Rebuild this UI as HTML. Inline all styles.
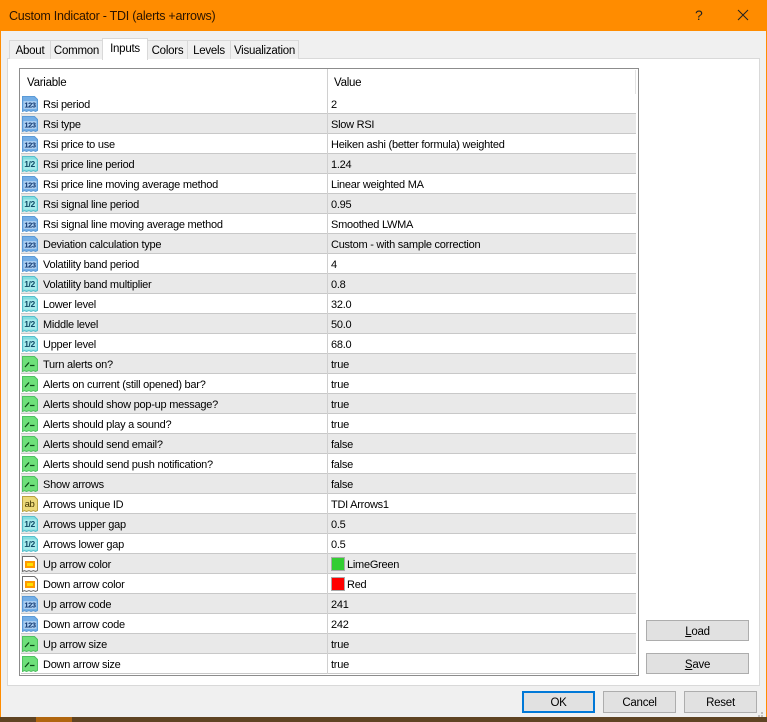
<!DOCTYPE html>
<html><head><meta charset="utf-8"><style>
html,body{margin:0;padding:0;background:#f0f0f0}
body{width:767px;height:722px;position:relative;overflow:hidden;font-family:"Liberation Sans",sans-serif;font-size:11px;letter-spacing:-.25px;color:#000}
div{position:absolute;box-sizing:border-box;white-space:nowrap}
.tab{top:40px;height:19px;background:#f0f0f0;border:1px solid #d9d9d9;border-bottom:none;text-align:center;line-height:20px;font-size:11.500px}
.btn{background:#e1e1e1;border:1px solid #adadad;text-align:center;line-height:22px;height:22px;font-size:11.500px}
.r{left:21px;width:615px;height:20px;border-bottom:1px solid #c8c8c8;background:#fff}
.g{background:#e9e9e9}
.n{left:22px;top:3px;line-height:17px}
.v{left:310px;top:3px;line-height:17px}
.r svg{position:absolute;left:1px;top:2px}
.s{position:absolute;width:14px;height:14px;left:310px;top:3px;border:1px solid #aaa;box-sizing:border-box}
svg text{letter-spacing:-.4px}
</style></head><body>
<svg width="0" height="0" style="position:absolute"><defs>
<symbol id="b" viewBox="0 0 16 16"><path d="M.5.5h12l3 3v11l-2 1-2-1-2.500 1-2-1-2.500 1-2-1-2 1z" fill="#74aee6" stroke="#5a9ad6"/><path d="M1.500 5h13v8h-13z" fill="#a9cdf0"/><text x="8" y="11.300" font-size="7.500" font-weight="bold" text-anchor="middle" fill="#10356e" font-family="Liberation Sans">123</text></symbol>
<symbol id="c" viewBox="0 0 16 16"><path d="M.5.5h12l3 3v11l-2 1-2-1-2.500 1-2-1-2.500 1-2-1-2 1z" fill="#84dde0" stroke="#55bfcc"/><path d="M1.500 3.500h13v10h-13z" fill="#a6ebec"/><text x="7.500" y="11" font-size="8.500" text-anchor="middle" fill="#104a66" font-weight="bold" font-family="Liberation Sans">1/2</text></symbol>
<symbol id="t" viewBox="0 0 16 16"><path d="M.5.5h12l3 3v11l-2 1-2-1-2.500 1-2-1-2.500 1-2-1-2 1z" fill="#6ee07a" stroke="#4ec060"/><path d="M3 11l4-4.500M8 9.500h4.500" stroke="#0c4a18" stroke-width="1.300" fill="none"/></symbol>
<symbol id="a" viewBox="0 0 16 16"><path d="M.5.5h12l3 3v11l-2 1-2-1-2.500 1-2-1-2.500 1-2-1-2 1z" fill="#ecd97a" stroke="#b8a040"/><text x="7.500" y="11" font-size="9.500" text-anchor="middle" fill="#3e3200" font-family="Liberation Sans">ab</text></symbol>
<symbol id="o" viewBox="0 0 16 16"><path d="M.5.5h12l3 3v11l-2 1-2-1-2.500 1-2-1-2.500 1-2-1-2 1z" fill="#fff" stroke="#6e6e6e"/><rect x="3" y="5" width="10" height="7" fill="#ff9a00"/><rect x="5" y="7" width="6" height="3" fill="#ffe000"/></symbol>
</defs></svg>
<div style="left:0;top:0;width:767px;height:31px;background:#ff8c00"></div>
<div style="left:9px;top:7px;font-size:12.500px;line-height:18px;color:#2a1400">Custom Indicator - TDI (alerts +arrows)</div>
<div style="left:695px;top:6px;font-size:14px;line-height:18px;color:#222">?</div>
<svg style="position:absolute;left:737px;top:9px" width="12" height="12"><path d="M1 1l10 10M11 1L1 11" stroke="#222" fill="none"/></svg>
<div style="left:0;top:31px;width:1px;height:686px;background:#ff8c00"></div>
<div style="left:766px;top:31px;width:1px;height:686px;background:#ff8c00"></div>
<div style="left:0;top:717px;width:767px;height:5px;background:#5f4423"></div>
<div style="left:36px;top:717px;width:36px;height:5px;background:#b0660f"></div>

<div style="left:7px;top:58px;width:753px;height:628px;background:#fff;border:1px solid #d9d9d9"></div>
<div class="tab" style="left:9px;width:42px">About</div>
<div class="tab" style="left:50px;width:53px">Common</div>
<div class="tab" style="left:102px;width:46px;top:38px;height:22px;background:#fff;z-index:2;line-height:21px">Inputs</div>
<div class="tab" style="left:147px;width:41px">Colors</div>
<div class="tab" style="left:187px;width:44px">Levels</div>
<div class="tab" style="left:230px;width:69px">Visualization</div>

<div style="left:19px;top:68px;width:620px;height:608px;background:#fff;border:1px solid #8c8c8c"></div>
<div style="left:27px;top:75px;line-height:16px;font-size:11.500px">Variable</div>
<div style="left:334px;top:75px;line-height:16px;font-size:11.500px">Value</div>
<div style="left:635px;top:70px;width:1px;height:24px;background:#e4e4e4"></div>

<div class="r" style="top:94px"><svg width="16" height="16"><use href="#b"/></svg><div class="n">Rsi period</div><div class="v">2</div></div>
<div class="r g" style="top:114px"><svg width="16" height="16"><use href="#b"/></svg><div class="n">Rsi type</div><div class="v">Slow RSI</div></div>
<div class="r" style="top:134px"><svg width="16" height="16"><use href="#b"/></svg><div class="n">Rsi price to use</div><div class="v">Heiken ashi (better formula) weighted</div></div>
<div class="r g" style="top:154px"><svg width="16" height="16"><use href="#c"/></svg><div class="n">Rsi price line period</div><div class="v">1.24</div></div>
<div class="r" style="top:174px"><svg width="16" height="16"><use href="#b"/></svg><div class="n">Rsi price line moving average method</div><div class="v">Linear weighted MA</div></div>
<div class="r g" style="top:194px"><svg width="16" height="16"><use href="#c"/></svg><div class="n">Rsi signal line period</div><div class="v">0.95</div></div>
<div class="r" style="top:214px"><svg width="16" height="16"><use href="#b"/></svg><div class="n">Rsi signal line moving average method</div><div class="v">Smoothed LWMA</div></div>
<div class="r g" style="top:234px"><svg width="16" height="16"><use href="#b"/></svg><div class="n">Deviation calculation type</div><div class="v">Custom - with sample correction</div></div>
<div class="r" style="top:254px"><svg width="16" height="16"><use href="#b"/></svg><div class="n">Volatility band period</div><div class="v">4</div></div>
<div class="r g" style="top:274px"><svg width="16" height="16"><use href="#c"/></svg><div class="n">Volatility band multiplier</div><div class="v">0.8</div></div>
<div class="r" style="top:294px"><svg width="16" height="16"><use href="#c"/></svg><div class="n">Lower level</div><div class="v">32.0</div></div>
<div class="r g" style="top:314px"><svg width="16" height="16"><use href="#c"/></svg><div class="n">Middle level</div><div class="v">50.0</div></div>
<div class="r" style="top:334px"><svg width="16" height="16"><use href="#c"/></svg><div class="n">Upper level</div><div class="v">68.0</div></div>
<div class="r g" style="top:354px"><svg width="16" height="16"><use href="#t"/></svg><div class="n">Turn alerts on?</div><div class="v">true</div></div>
<div class="r" style="top:374px"><svg width="16" height="16"><use href="#t"/></svg><div class="n">Alerts on current (still opened) bar?</div><div class="v">true</div></div>
<div class="r g" style="top:394px"><svg width="16" height="16"><use href="#t"/></svg><div class="n">Alerts should show pop-up message?</div><div class="v">true</div></div>
<div class="r" style="top:414px"><svg width="16" height="16"><use href="#t"/></svg><div class="n">Alerts should play a sound?</div><div class="v">true</div></div>
<div class="r g" style="top:434px"><svg width="16" height="16"><use href="#t"/></svg><div class="n">Alerts should send email?</div><div class="v">false</div></div>
<div class="r" style="top:454px"><svg width="16" height="16"><use href="#t"/></svg><div class="n">Alerts should send push notification?</div><div class="v">false</div></div>
<div class="r g" style="top:474px"><svg width="16" height="16"><use href="#t"/></svg><div class="n">Show arrows</div><div class="v">false</div></div>
<div class="r" style="top:494px"><svg width="16" height="16"><use href="#a"/></svg><div class="n">Arrows unique ID</div><div class="v">TDI Arrows1</div></div>
<div class="r g" style="top:514px"><svg width="16" height="16"><use href="#c"/></svg><div class="n">Arrows upper gap</div><div class="v">0.5</div></div>
<div class="r" style="top:534px"><svg width="16" height="16"><use href="#c"/></svg><div class="n">Arrows lower gap</div><div class="v">0.5</div></div>
<div class="r g" style="top:554px"><svg width="16" height="16"><use href="#o"/></svg><div class="n">Up arrow color</div><span class="s" style="background:#32cd32"></span><div class="v" style="left:326px">LimeGreen</div></div>
<div class="r" style="top:574px"><svg width="16" height="16"><use href="#o"/></svg><div class="n">Down arrow color</div><span class="s" style="background:#f00"></span><div class="v" style="left:326px">Red</div></div>
<div class="r g" style="top:594px"><svg width="16" height="16"><use href="#b"/></svg><div class="n">Up arrow code</div><div class="v">241</div></div>
<div class="r" style="top:614px"><svg width="16" height="16"><use href="#b"/></svg><div class="n">Down arrow code</div><div class="v">242</div></div>
<div class="r g" style="top:634px"><svg width="16" height="16"><use href="#t"/></svg><div class="n">Up arrow size</div><div class="v">true</div></div>
<div class="r" style="top:654px"><svg width="16" height="16"><use href="#t"/></svg><div class="n">Down arrow size</div><div class="v">true</div></div>
<div style="left:327px;top:69px;width:1px;height:605px;background:#d0d0d0"></div>

<div class="btn" style="left:646px;top:620px;width:103px;height:21px"><u>L</u>oad</div>
<div class="btn" style="left:646px;top:653px;width:103px;height:21px"><u>S</u>ave</div>
<div class="btn" style="left:522px;top:691px;width:73px;border:2px solid #0078d7;line-height:20px">OK</div>
<div class="btn" style="left:603px;top:691px;width:73px">Cancel</div>
<div class="btn" style="left:684px;top:691px;width:73px">Reset</div>
<svg style="position:absolute;left:757px;top:712px" width="8" height="5"><path d="M4 0h2v2H4zM1 3h2v2H1zM4 3h2v2H4z" fill="#bdbdbd"/></svg>
</body></html>
